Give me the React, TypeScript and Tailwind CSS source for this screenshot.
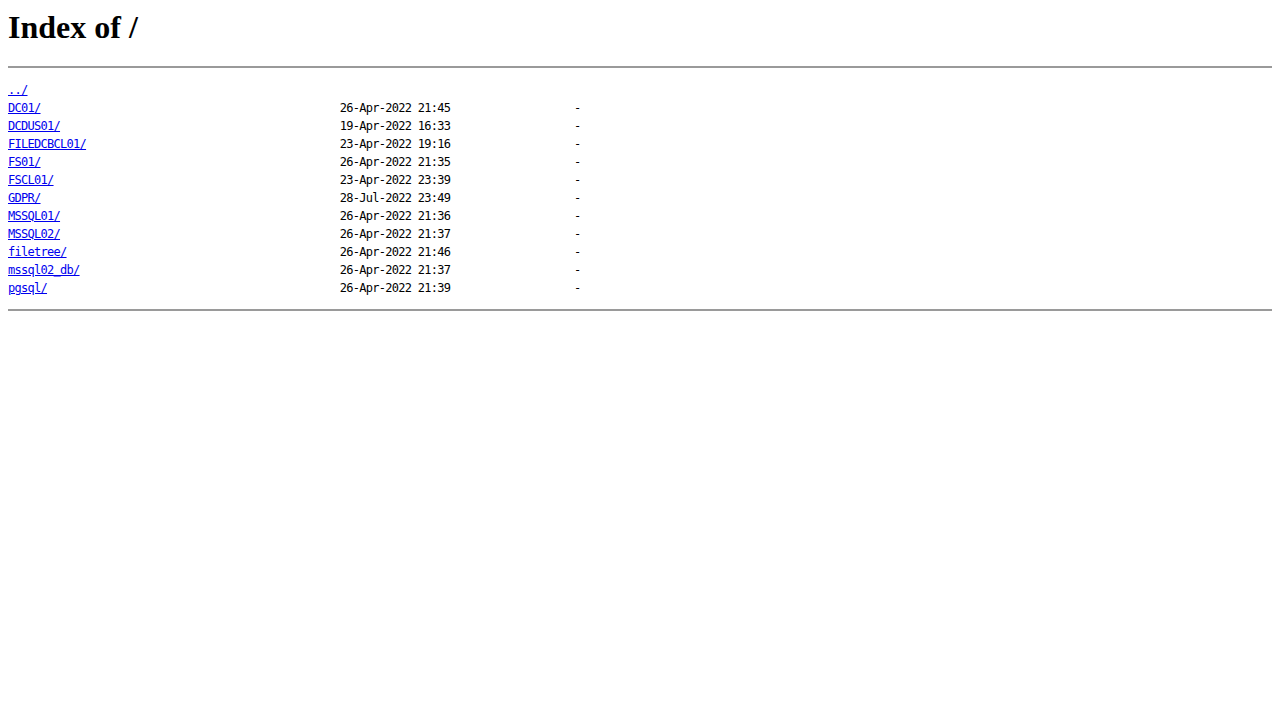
import React from 'react';

const entries: [string, string][] = [
  ['DC01/', '26-Apr-2022 21:45'],
  ['DCDUS01/', '19-Apr-2022 16:33'],
  ['FILEDCBCL01/', '23-Apr-2022 19:16'],
  ['FS01/', '26-Apr-2022 21:35'],
  ['FSCL01/', '23-Apr-2022 23:39'],
  ['GDPR/', '28-Jul-2022 23:49'],
  ['MSSQL01/', '26-Apr-2022 21:36'],
  ['MSSQL02/', '26-Apr-2022 21:37'],
  ['filetree/', '26-Apr-2022 21:46'],
  ['mssql02_db/', '26-Apr-2022 21:37'],
  ['pgsql/', '26-Apr-2022 21:39'],
];

const Link = ({ name }: { name: string }) => (
  <a href={name} className="text-[#0000ee] underline">
    {name}
  </a>
);

const App = () => {
  return (
    <div className="min-h-screen bg-white px-2 pt-[9px] text-black font-['Liberation_Serif',serif]">
      <h1 className="text-[32px] font-bold leading-[37px]">Index of /</h1>
      <hr className="mt-[20px] border-0 h-[2px] bg-[#9a9a9a]" />

      {/* listing */}
      <pre className="mt-[13px] text-[12px] leading-[18px] tracking-[-0.72px] font-['DejaVu_Sans_Mono',monospace] whitespace-pre">
        <div>
          <Link name="../" />
        </div>
        {entries.map(([name, date]) => (
          <div key={name}>
            <Link name={name} />
            {' '.repeat(51 - name.length)}
            {date}
            {'-'.padStart(20, ' ')}
          </div>
        ))}
      </pre>

      <hr className="mt-[12px] border-0 h-[2px] bg-[#9a9a9a]" />
    </div>
  );
};

export default App;
